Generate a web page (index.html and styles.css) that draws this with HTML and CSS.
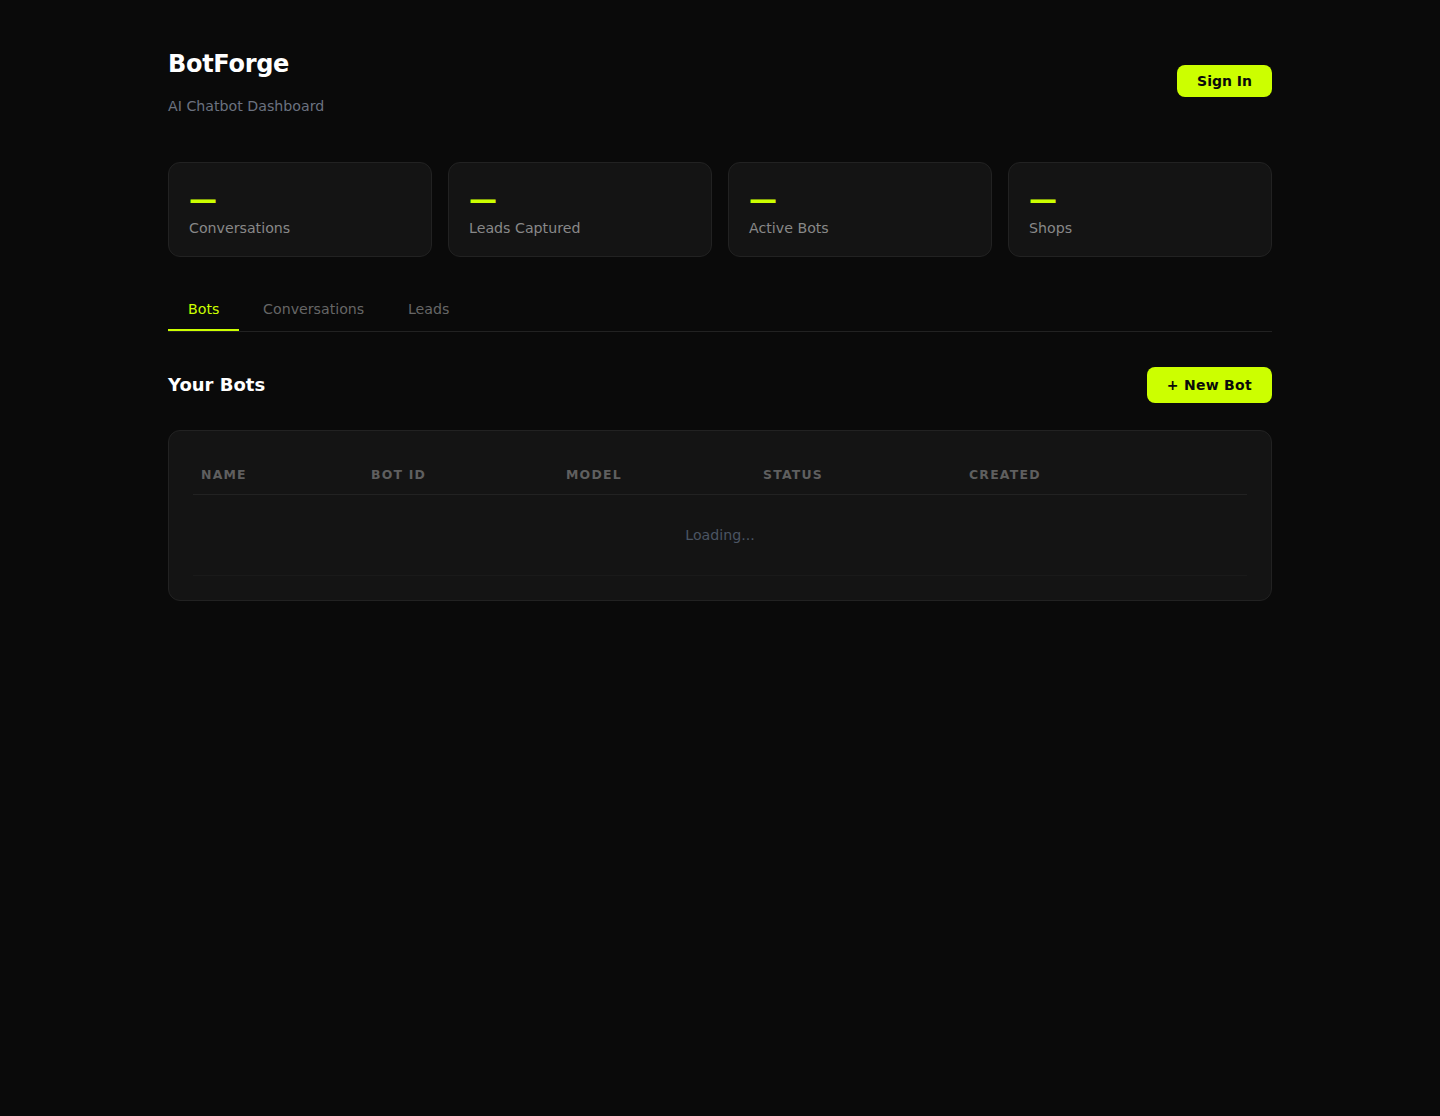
FILE: index.html
```html
<!DOCTYPE html>
<html lang="en">
<head>
    <meta charset="UTF-8">
    <meta name="viewport" content="width=device-width, initial-scale=1.0">
    <title>BotForge</title>
    <link rel="stylesheet" href="styles.css">
</head>
<body>
    <div class="container">
        <header class="header">
            <div>
                <h1>BotForge</h1>
                <p class="subtitle">AI Chatbot Dashboard</p>
            </div>
            <button class="button button-small">Sign In</button>
        </header>

        <div class="stats">
            <div class="stat-card">
                <div class="stat-value">—</div>
                <div class="stat-label">Conversations</div>
            </div>
            <div class="stat-card">
                <div class="stat-value">—</div>
                <div class="stat-label">Leads Captured</div>
            </div>
            <div class="stat-card">
                <div class="stat-value">—</div>
                <div class="stat-label">Active Bots</div>
            </div>
            <div class="stat-card">
                <div class="stat-value">—</div>
                <div class="stat-label">Shops</div>
            </div>
        </div>

        <nav class="tabs">
            <div class="tab active">Bots</div>
            <div class="tab">Conversations</div>
            <div class="tab">Leads</div>
        </nav>

        <div class="section-header">
            <h2>Your Bots</h2>
            <button class="button button-large">+ New Bot</button>
        </div>

        <div class="table-card">
            <table>
                <thead>
                    <tr>
                        <th class="col-name">Name</th>
                        <th class="col-id">Bot ID</th>
                        <th class="col-model">Model</th>
                        <th class="col-status">Status</th>
                        <th>Created</th>
                        <th></th>
                    </tr>
                </thead>
                <tbody>
                    <tr>
                        <td colspan="6" class="loading">Loading...</td>
                    </tr>
                </tbody>
            </table>
        </div>
    </div>
</body>
</html>
```

FILE: styles.css
```css
* {
    box-sizing: border-box;
    margin: 0;
    padding: 0;
}
body {
    font-family: "DejaVu Sans", sans-serif;
    background: #0a0a0a;
    color: #fff;
    min-height: 100vh;
}
.container {
    max-width: 1200px;
    margin: 0 auto;
    padding: 48px;
}
.header {
    display: flex;
    justify-content: space-between;
    align-items: center;
    margin-bottom: 48px;
}
h1 {
    font-size: 24px;
    font-weight: 700;
    letter-spacing: -0.3px;
    line-height: 32px;
    margin-bottom: 18px;
}
.subtitle {
    font-size: 14.2px;
    line-height: 16px;
    color: #6b7280;
}
.button {
    background: #ccff00;
    color: #0a0a0a;
    font-family: inherit;
    font-size: 14px;
    font-weight: 700;
    padding: 8px 20px;
    border: none;
    border-radius: 8px;
    cursor: pointer;
}
.button-large {
    letter-spacing: 0.3px;
    padding: 10px 20px;
}
.stats {
    display: grid;
    grid-template-columns: repeat(4, 1fr);
    gap: 16px;
    margin-bottom: 32px;
}
.stat-card {
    background: #141414;
    border: 1px solid #222;
    border-radius: 12px;
    padding: 20px;
}
.stat-value {
    color: #ccff00;
    font-size: 28px;
    font-weight: 700;
    margin-bottom: 4px;
}
.stat-label {
    color: #888;
    font-size: 14.2px;
}
.tabs {
    display: flex;
    gap: 3.7px;
    border-bottom: 1px solid #222;
    margin-bottom: 35px;
}
.tab {
    color: #666;
    font-size: 14.2px;
    line-height: 20px;
    padding: 10px 20px;
    border-bottom: 2px solid transparent;
}
.tab.active {
    color: #ccff00;
    border-bottom-color: #ccff00;
}
.section-header {
    display: flex;
    justify-content: space-between;
    align-items: center;
    margin-bottom: 27px;
}
h2 {
    font-size: 18px;
    font-weight: 700;
    line-height: 20px;
    margin-top: -1px;
}
.table-card {
    background: #141414;
    border: 1px solid #222;
    border-radius: 12px;
    padding: 24px;
}
table {
    width: 100%;
    border-collapse: collapse;
    table-layout: fixed;
}
th {
    color: #5f5f5f;
    font-size: 12.48px;
    font-weight: 700;
    letter-spacing: 1.2px;
    line-height: 15px;
    text-transform: uppercase;
    text-align: left;
    padding: 12px 8px;
    border-bottom: 1px solid #222;
}
.col-name {
    width: 170px;
}
.col-id {
    width: 195px;
}
.col-model {
    width: 197px;
}
.col-status {
    width: 206px;
}
td {
    font-size: 14.2px;
    padding: 16px 8px;
    border-bottom: 1px solid #1a1a1a;
}
.loading {
    color: #4b5563;
    text-align: center;
    padding: 32px 8px;
}
```
